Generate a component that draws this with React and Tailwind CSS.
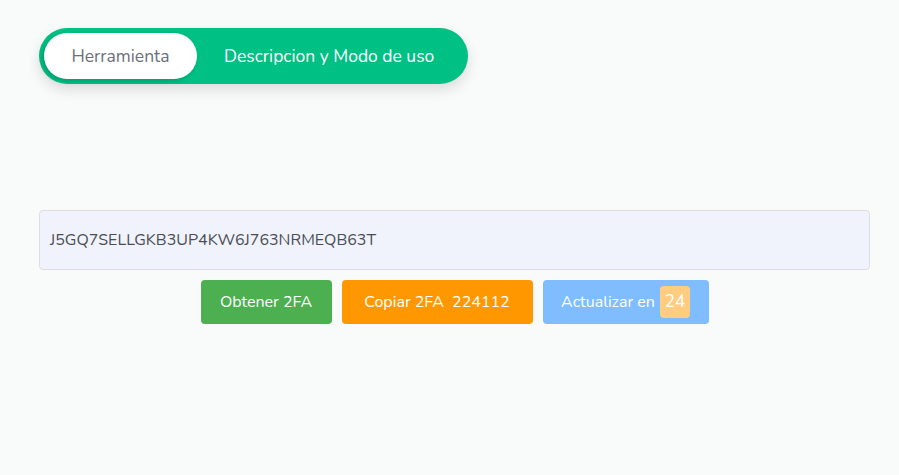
export default function App() {
  return (
    <div
      className="min-h-[475px] w-full bg-[#f9fbfa] px-[39px] pt-[28px]"
      style={{ fontFamily: '"Nunito", "Noto Sans", sans-serif' }}
    >
      <div className="flex">
        <div className="flex h-[56px] items-center rounded-full bg-[#00c083] p-[5px] pr-[34px] shadow-[0_6px_14px_rgba(0,0,0,0.12)]">
          <div className="flex h-[46px] w-[153px] items-center justify-center rounded-full bg-white text-[17.5px] text-[#6b6f7a] shadow-[-2px_2px_4px_rgba(0,90,60,0.35)]">
            Herramienta
          </div>
          <div className="pl-[27px] text-[17.5px] text-white">Descripcion y Modo de uso</div>
        </div>
      </div>

      <div className="mt-[126px] flex h-[60px] w-[831px] items-center rounded-[4px] border border-[#dcdee2] bg-[#f0f3fb] px-[10px] text-[16px] text-[#4a4d55]">
        J5GQ7SELLGKB3UP4KW6J763NRMEQB63T
      </div>

      <div className="mt-[10px] flex w-[831px] justify-center gap-[10px] text-[16px] text-white">
        <button className="flex h-[44px] w-[131px] items-center justify-center rounded-[4px] bg-[#4caf50]">
          Obtener 2FA
        </button>
        <button className="flex h-[44px] w-[191px] items-center justify-center rounded-[4px] bg-[#ff9800]">
          Copiar 2FA&nbsp;&nbsp;224112
        </button>
        <button className="flex h-[44px] w-[166px] items-center justify-center gap-[5px] rounded-[4px] bg-[#80bdff]">
          Actualizar en
          <span className="flex h-[32px] w-[30px] items-center justify-center rounded-[4px] bg-[#ffcc80] text-[17px]">
            24
          </span>
        </button>
      </div>
    </div>
  );
}
